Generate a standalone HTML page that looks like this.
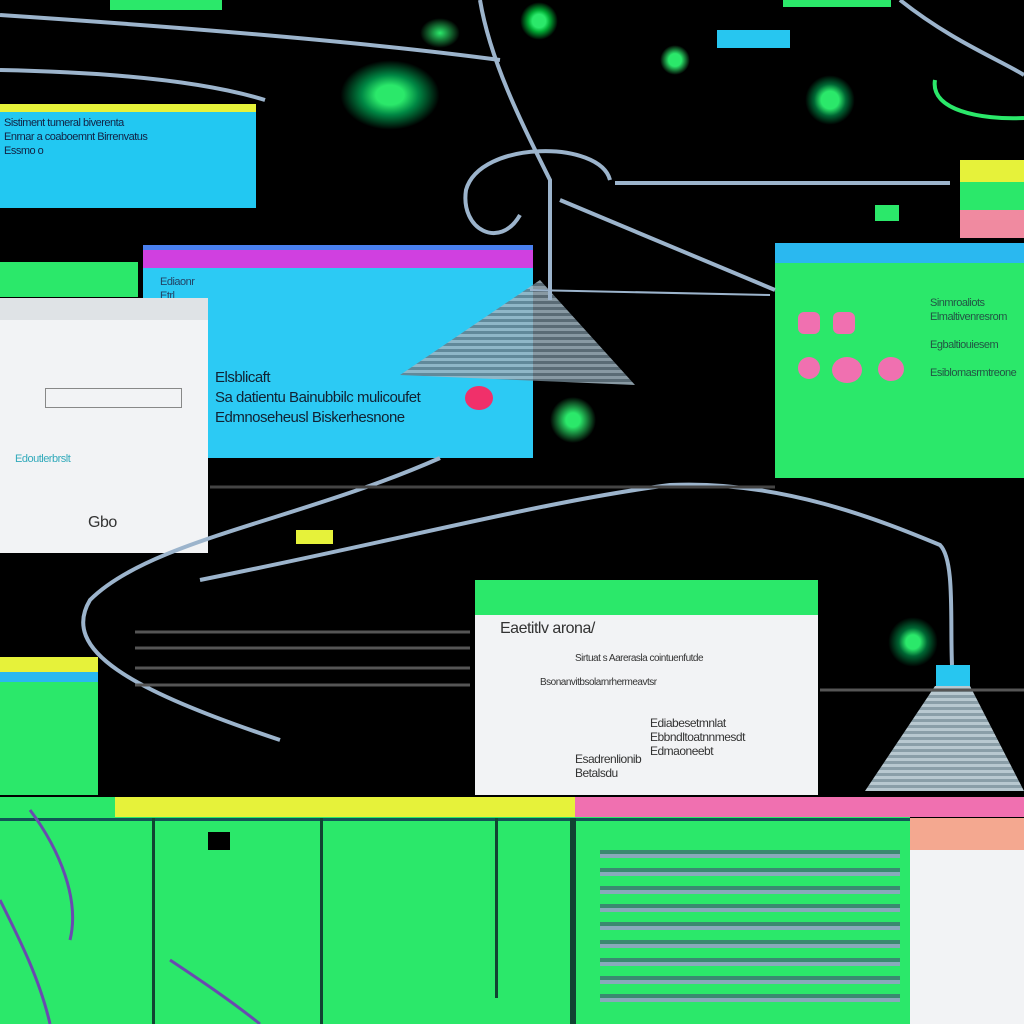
<!DOCTYPE html>
<html><head><meta charset="utf-8"><style>
body{margin:0;width:1024px;height:1024px;background:#000;position:relative;overflow:hidden;font-family:"Liberation Sans",sans-serif}
div{position:absolute}
.t{font-size:11px;color:#333;line-height:14px;white-space:nowrap;letter-spacing:-0.5px}
</style></head><body>
<div style="left:110px;top:0;width:112px;height:10px;background:#2be86a"></div>
<div style="left:783px;top:0;width:108px;height:7px;background:#2be86a"></div>
<div style="left:717px;top:30px;width:73px;height:18px;background:#27c6f0"></div>
<div style="left:0;top:104px;width:256px;height:104px;background:#22c8f2"></div>
<div style="left:0;top:104px;width:256px;height:8px;background:#e6f23a"></div>
<div class="t" style="left:4px;top:116px;color:#124">Sistiment tumeral biverenta<br>Enrnar a coaboemnt Birrenvatus<br>Essmo o</div>
<div style="left:143px;top:245px;width:390px;height:213px;background:#2ccaf4"></div>
<div style="left:143px;top:245px;width:390px;height:23px;background:#d040e0"></div>
<div style="left:143px;top:245px;width:390px;height:5px;background:#4a80f0"></div>
<div class="t" style="left:160px;top:275px;color:#246">Ediaonr<br>Etrl<br>Essonrpl</div>
<div class="t" style="left:215px;top:368px;font-size:15px;line-height:20px;color:#123">Elsblicaft<br>Sa datientu Bainubbilc mulicoufet<br>Edmnoseheusl Biskerhesnone</div>
<div style="left:465px;top:386px;width:28px;height:24px;border-radius:50%;background:#f0306a"></div>
<svg style="position:absolute;left:390px;top:280px" width="260" height="110"><defs><pattern id="p" width="4" height="6" patternUnits="userSpaceOnUse"><rect width="4" height="3" fill="#a0b4c0"/><rect y="3" width="4" height="3" fill="#6a7e8a"/></pattern></defs><polygon points="150,0 245,105 10,95" fill="url(#p)" opacity=".85"/></svg>
<div style="left:0;top:262px;width:138px;height:35px;background:#2be86a"></div>
<div style="left:0;top:298px;width:208px;height:255px;background:#f2f3f5"></div>
<div style="left:0;top:298px;width:208px;height:22px;background:#dfe3e6"></div>
<div style="left:45px;top:388px;width:135px;height:18px;border:1px solid #888"></div>
<div class="t" style="left:88px;top:516px;font-size:16px">Gbo</div>
<div class="t" style="left:15px;top:452px;color:#3ab">Edoutlerbrslt</div>
<div style="left:775px;top:243px;width:249px;height:235px;background:#2be86a"></div>
<div style="left:775px;top:243px;width:249px;height:20px;background:#2ab8f0"></div>
<div class="t" style="left:930px;top:296px;color:#254">Sinmroaliots<br>Elmaltivenresrom<br><br>Egbaltiouiesem<br><br>Esiblomasrmtreone</div>
<div style="left:798px;top:312px;width:22px;height:22px;border-radius:6px;background:#f070b0"></div>
<div style="left:833px;top:312px;width:22px;height:22px;border-radius:6px;background:#f070b0"></div>
<div style="left:798px;top:357px;width:22px;height:22px;border-radius:50%;background:#f070b0"></div>
<div style="left:832px;top:357px;width:30px;height:26px;border-radius:50%;background:#f070b0"></div>
<div style="left:878px;top:357px;width:26px;height:24px;border-radius:50%;background:#f070b0"></div>
<div style="left:960px;top:160px;width:64px;height:78px;background:#2be86a"></div>
<div style="left:960px;top:160px;width:64px;height:22px;background:#e6f23a"></div>
<div style="left:960px;top:210px;width:64px;height:28px;background:#f08aa0"></div>
<div style="left:475px;top:580px;width:343px;height:215px;background:#f2f3f5"></div>
<div style="left:475px;top:580px;width:343px;height:35px;background:#2be86a"></div>
<div class="t" style="left:500px;top:622px;font-size:16px">Eaetitlv arona/</div>
<div class="t" style="left:575px;top:652px;font-size:10px">Sirtuat s Aarerasla cointuenfutde</div>
<div class="t" style="left:540px;top:676px;font-size:10px">Bsonanvitbsolarnrhermeavtsr</div>
<div class="t" style="left:650px;top:716px;font-size:12px">Ediabesetmnlat<br>Ebbndltoatnnmesdt<br>Edmaoneebt</div>
<div class="t" style="left:575px;top:752px;font-size:12px">Esadrenlionib<br>Betalsdu</div>
<div style="left:296px;top:530px;width:37px;height:14px;background:#e6f23a"></div>
<div style="left:0;top:657px;width:98px;height:138px;background:#2be86a"></div>
<div style="left:0;top:657px;width:98px;height:15px;background:#e6f23a"></div>
<div style="left:0;top:672px;width:98px;height:10px;background:#2ab8f0"></div>
<div style="left:936px;top:665px;width:34px;height:23px;background:#27c6f0"></div>
<svg style="position:absolute;left:860px;top:686px" width="164" height="110"><defs><pattern id="q" width="4" height="6" patternUnits="userSpaceOnUse"><rect width="4" height="3" fill="#b8c8d0"/><rect y="3" width="4" height="3" fill="#8a9ea8"/></pattern></defs><polygon points="75,0 110,0 164,105 5,105" fill="url(#q)"/></svg>
<div style="left:0;top:797px;width:910px;height:227px;background:#2be86a"></div>
<div style="left:115px;top:797px;width:460px;height:20px;background:#e6f23a"></div>
<div style="left:575px;top:797px;width:449px;height:20px;background:#f070b0"></div>
<div style="left:0;top:818px;width:910px;height:3px;background:#155"></div>
<div style="left:152px;top:818px;width:3px;height:206px;background:#143"></div>
<div style="left:320px;top:818px;width:3px;height:206px;background:#143"></div>
<div style="left:495px;top:818px;width:3px;height:180px;background:#143"></div>
<div style="left:570px;top:818px;width:6px;height:206px;background:#143"></div>
<div style="left:600px;top:840px;width:300px;height:170px;background:repeating-linear-gradient(#2be86a 0 10px,#3a8a70 10px 14px,#8ab 14px 18px)"></div>
<div style="left:910px;top:818px;width:114px;height:206px;background:#f2f3f5"></div>
<div style="left:910px;top:818px;width:114px;height:32px;background:#f4a890"></div>
<div style="left:208px;top:832px;width:22px;height:18px;background:#000"></div>
<svg style="position:absolute;left:0;top:0" width="1024" height="1024" fill="none" stroke="#9cb4cc" stroke-width="4">
<path d="M0 70 C100 72 200 80 265 100"/>
<path d="M0 15 C150 25 350 40 500 60"/>
<path d="M480 0 C490 60 520 120 550 180 L550 300"/>
<path d="M610 180 C600 140 480 140 466 190 C460 230 500 250 520 215"/>
<path d="M615 183 L950 183"/>
<path d="M560 200 L775 290"/>
<path d="M530 290 L770 295" stroke-width="2"/>
<path d="M440 458 C300 520 150 540 90 600 C60 650 130 690 280 740"/>
<path d="M200 580 C400 540 550 500 670 485 C780 480 880 520 940 545 C955 560 950 620 952 665"/>
<path d="M900 0 C950 40 1000 60 1024 75"/>
<path d="M935 80 C930 110 980 120 1024 118" stroke="#2be86a"/>
<path d="M135 632 L470 632 M135 648 L470 648 M135 668 L470 668 M135 685 L470 685" stroke="#555" stroke-width="3"/>
<path d="M820 690 L1024 690" stroke="#555" stroke-width="3"/>
<path d="M210 487 L775 487" stroke="#444" stroke-width="3"/>
<path d="M30 810 C60 850 80 900 70 940 M0 900 C20 940 40 980 50 1024 M170 960 C200 980 230 1000 260 1024" stroke="#6a4ab0" stroke-width="3"/>
</svg>
<div style="left:420px;top:18px;width:40px;height:30px;border-radius:50%;background:radial-gradient(#2be86a,transparent 70%)"></div>
<div style="left:520px;top:2px;width:38px;height:38px;border-radius:50%;background:radial-gradient(#2be86a 25%,#0a3 40%,transparent 70%)"></div>
<div style="left:805px;top:75px;width:50px;height:50px;border-radius:50%;background:radial-gradient(#2be86a 25%,#063 45%,transparent 70%)"></div>
<div style="left:660px;top:45px;width:30px;height:30px;border-radius:50%;background:radial-gradient(#2be86a 30%,transparent 70%)"></div>
<div style="left:340px;top:60px;width:100px;height:70px;background:radial-gradient(#2be86a 20%,#084 40%,transparent 70%)"></div>
<div style="left:548px;top:395px;width:50px;height:50px;border-radius:50%;background:radial-gradient(#2be86a 20%,transparent 65%)"></div>
<div style="left:888px;top:617px;width:50px;height:50px;border-radius:50%;background:radial-gradient(#2be86a 20%,#063 40%,transparent 70%)"></div>
<div style="left:875px;top:205px;width:24px;height:16px;background:#2be86a"></div>
</body></html>
